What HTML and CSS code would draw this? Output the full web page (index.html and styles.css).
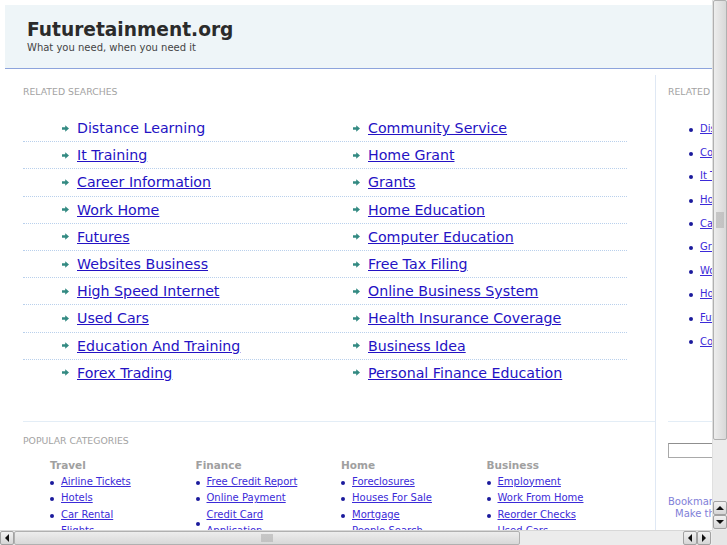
FILE: index.html
```html
<!DOCTYPE html>
<html lang="en">
<head>
  <meta charset="UTF-8">
  <title>Futuretainment.org</title>
  <link rel="stylesheet" href="styles.css">
</head>
<body>
  <div class="page">
    <div class="header">
      <div class="site-title">Futuretainment.org</div>
      <div class="tagline">What you need, when you need it</div>
    </div>

    <div class="main">
      <div class="content">
        <div class="section-title first">Related Searches</div>
        <div class="searches">
          <div class="row">
            <a class="search-link hover" href="#">Distance Learning</a>
            <a class="search-link" href="#">Community Service</a>
          </div>
          <div class="row">
            <a class="search-link" href="#">It Training</a>
            <a class="search-link" href="#">Home Grant</a>
          </div>
          <div class="row">
            <a class="search-link" href="#">Career Information</a>
            <a class="search-link" href="#">Grants</a>
          </div>
          <div class="row">
            <a class="search-link" href="#">Work Home</a>
            <a class="search-link" href="#">Home Education</a>
          </div>
          <div class="row">
            <a class="search-link" href="#">Futures</a>
            <a class="search-link" href="#">Computer Education</a>
          </div>
          <div class="row">
            <a class="search-link" href="#">Websites Business</a>
            <a class="search-link" href="#">Free Tax Filing</a>
          </div>
          <div class="row">
            <a class="search-link" href="#">High Speed Internet</a>
            <a class="search-link" href="#">Online Business System</a>
          </div>
          <div class="row">
            <a class="search-link" href="#">Used Cars</a>
            <a class="search-link" href="#">Health Insurance Coverage</a>
          </div>
          <div class="row">
            <a class="search-link" href="#">Education And Training</a>
            <a class="search-link" href="#">Business Idea</a>
          </div>
          <div class="row">
            <a class="search-link" href="#">Forex Trading</a>
            <a class="search-link" href="#">Personal Finance Education</a>
          </div>
        </div>

        <div class="divider"></div>

        <div class="section-title">Popular Categories</div>
        <div class="categories">
          <div class="category">
            <div class="cat-title">Travel</div>
            <ul class="cat-list">
              <li><a href="#">Airline Tickets</a></li>
              <li><a href="#">Hotels</a></li>
              <li><a href="#">Car Rental</a></li>
              <li><a href="#">Flights</a></li>
            </ul>
          </div>
          <div class="category">
            <div class="cat-title">Finance</div>
            <ul class="cat-list">
              <li><a href="#">Free Credit Report</a></li>
              <li><a href="#">Online Payment</a></li>
              <li><a href="#">Credit Card Application</a></li>
            </ul>
          </div>
          <div class="category">
            <div class="cat-title">Home</div>
            <ul class="cat-list">
              <li><a href="#">Foreclosures</a></li>
              <li><a href="#">Houses For Sale</a></li>
              <li><a href="#">Mortgage</a></li>
              <li><a href="#">People Search</a></li>
            </ul>
          </div>
          <div class="category">
            <div class="cat-title">Business</div>
            <ul class="cat-list">
              <li><a href="#">Employment</a></li>
              <li><a href="#">Work From Home</a></li>
              <li><a href="#">Reorder Checks</a></li>
              <li><a href="#">Used Cars</a></li>
            </ul>
          </div>
        </div>
      </div>

      <div class="sidebar">
        <div class="section-title">Related</div>
        <ul class="side-list">
          <li><a href="#">Distance Learning</a></li>
          <li><a href="#">Community Service</a></li>
          <li><a href="#">It Training</a></li>
          <li><a href="#">Home Grant</a></li>
          <li><a href="#">Career Information</a></li>
          <li><a href="#">Grants</a></li>
          <li><a href="#">Work Home</a></li>
          <li><a href="#">Home Education</a></li>
          <li><a href="#">Futures</a></li>
          <li><a href="#">Computer Education</a></li>
        </ul>
        <div class="side-divider"></div>
        <input class="search-box" type="text">
        <div class="bookmark">Bookmark this page</div>
        <div class="bookmark second">Make this site</div>
      </div>
    </div>
  </div>

  <!-- window scrollbars -->
  <div class="vscroll">
    <div class="vthumb"><span class="grip"></span></div>
    <div class="sbtn up"><span class="tri tri-up"></span></div>
    <div class="sbtn down"><span class="tri tri-down"></span></div>
  </div>
  <div class="hscroll">
    <div class="sbtn left-start"><span class="tri tri-left"></span></div>
    <div class="hthumb"><span class="grip"></span></div>
    <div class="sbtn left-end"><span class="tri tri-left"></span></div>
    <div class="sbtn right-end"><span class="tri tri-right"></span></div>
  </div>
  <div class="corner"></div>
</body>
</html>
```

FILE: styles.css
```css
/* Global */
body {
  margin: 0;
  font-family: 'DejaVu Sans', Verdana, sans-serif;
  background: #fff;
  color: #333;
  overflow: hidden;
}

.page {
  width: 900px;
  padding: 5px 0 0 5px;
}

/* Header */
.header {
  height: 64px;
  box-sizing: border-box;
  padding: 14px 0 0 22px;
  background-color: #eef5f8;
  border-bottom: 1px solid #8da4dc;
}

.site-title {
  font-size: 18.6px;
  font-weight: bold;
  line-height: 22px;
  color: #2b2b2b;
}

.tagline {
  font-size: 10px;
  line-height: 12px;
  margin-top: 1px;
  color: #444;
}

/* Layout */
.main {
  display: flex;
  align-items: flex-start;
}

.content {
  width: 632px;
  padding-left: 18px;
}

.section-title {
  font-size: 9.3px;
  line-height: 12px;
  text-transform: uppercase;
  color: #a3a3a3;
}

.section-title.first {
  margin-top: 17px;
}

/* Related searches */
.searches {
  width: 604px;
  margin-top: 17px;
}

.row {
  display: grid;
  grid-template-columns: 291px 1fr;
  padding-left: 39px;
  line-height: 26.2px;
  border-bottom: 1px dotted #b9d0ec;
}

.row:last-child {
  border-bottom: none;
}

.search-link {
  display: flex;
  align-items: center;
  font-size: 14.2px;
  color: #2412c4;
  text-decoration: underline;
}

.search-link::before {
  content: '';
  flex: none;
  width: 7px;
  height: 7px;
  margin-right: 8px;
  background: url("data:image/svg+xml;utf8,<svg xmlns='http://www.w3.org/2000/svg' width='7' height='7'><path d='M0 2.3h3.2V0.2L7 3.5 3.2 6.8V4.7H0z' fill='%23338a82'/></svg>") no-repeat;
}

.search-link.hover {
  text-decoration: none;
}

.divider {
  width: 632px;
  height: 1px;
  margin-top: 35px;
  background: #e3edf6;
}

/* Popular categories */
.divider + .section-title {
  margin-top: 13px;
}

.categories {
  display: grid;
  grid-template-columns: repeat(4, 145.5px);
  padding-left: 27px;
  margin-top: 11px;
}

.cat-title {
  font-size: 10.5px;
  font-weight: bold;
  line-height: 14px;
  color: #a0a0a0;
}

.cat-list {
  list-style: none;
  margin: 1.5px 0 0;
  padding: 0;
  width: 112px;
}

.cat-list li,
.side-list li {
  display: flex;
  align-items: center;
  font-size: 10px;
  line-height: 16.5px;
}

.cat-list li::before,
.side-list li::before {
  content: '';
  flex: none;
  width: 4px;
  height: 4px;
  margin-top: 2px;
  margin-right: 7px;
  border-radius: 2px;
  background: #1b1a9c;
}

.cat-list a,
.side-list a {
  color: #3b2ad8;
}

/* Sidebar */
.sidebar {
  width: 200px;
  margin-top: 6px;
  padding-left: 12px;
  border-left: 1px solid #dfe8f4;
  min-height: 480px;
}

.sidebar .section-title {
  margin-top: 11px;
}

.side-list {
  list-style: none;
  margin: 19.2px 0 0;
  padding: 0 0 0 21px;
}

.side-list li {
  line-height: 23.6px;
}

.side-divider {
  height: 1px;
  margin-top: 67.8px;
  background: #e3edf6;
}

.search-box {
  display: block;
  width: 150px;
  height: 15px;
  box-sizing: border-box;
  margin: 21px 0 0;
  border: 1px solid #a9a9a9;
  border-top-color: #8f8f8f;
  padding: 0;
}

.bookmark {
  margin-top: 38px;
  font-size: 10px;
  line-height: 12px;
  color: #7f80d8;
}

.bookmark.second {
  margin-top: 0;
  padding-left: 7px;
}

/* Window scrollbars */
.vscroll {
  position: fixed;
  top: 0;
  right: 0;
  width: 15px;
  height: 530px;
  background: #ececec;
  border-left: 1px solid #e0e0e0;
  box-sizing: border-box;
}

.hscroll {
  position: fixed;
  left: 0;
  bottom: 0;
  width: 712px;
  height: 15px;
  background: #ececec;
  border-top: 1px solid #d8d8d8;
  box-sizing: border-box;
}

.corner {
  position: fixed;
  right: 0;
  bottom: 0;
  width: 15px;
  height: 15px;
  background: #e6e6e6;
}

.vthumb {
  position: absolute;
  top: 0;
  left: 0;
  width: 14px;
  height: 440px;
  box-sizing: border-box;
  border: 1px solid #b0b0b0;
  border-radius: 2px;
  background: linear-gradient(to right, #ededed, #d8d8d8);
  display: flex;
  align-items: center;
  justify-content: center;
}

.hthumb {
  position: absolute;
  left: 14px;
  top: 0;
  width: 506px;
  height: 14px;
  box-sizing: border-box;
  border: 1px solid #b0b0b0;
  border-radius: 2px;
  background: linear-gradient(#ededed, #d8d8d8);
  display: flex;
  align-items: center;
  justify-content: center;
}

.grip {
  background: radial-gradient(circle, #b4b4b4 0.6px, transparent 0.9px) 0 0 / 2px 2px;
}

.hthumb .grip {
  width: 12px;
  height: 8px;
}

.vthumb .grip {
  width: 8px;
  height: 16px;
}

.sbtn {
  position: absolute;
  width: 14px;
  height: 14px;
  box-sizing: border-box;
  border: 1px solid #a2a2a2;
  border-radius: 2px;
  background: linear-gradient(#f2f2f2, #d6d6d6);
  display: flex;
  align-items: center;
  justify-content: center;
}

.sbtn.up { left: 0; top: 501px; }
.sbtn.down { left: 0; top: 515px; }
.sbtn.left-start { left: 0; top: 0; }
.sbtn.left-end { left: 683px; top: 0; }
.sbtn.right-end { left: 697px; top: 0; }

.tri {
  width: 0;
  height: 0;
  border: 4px solid transparent;
}

.tri-up { border-bottom-color: #111; border-top-width: 0; }
.tri-down { border-top-color: #111; border-bottom-width: 0; }
.tri-left { border-right-color: #111; border-left-width: 0; }
.tri-right { border-left-color: #111; border-right-width: 0; }
```
